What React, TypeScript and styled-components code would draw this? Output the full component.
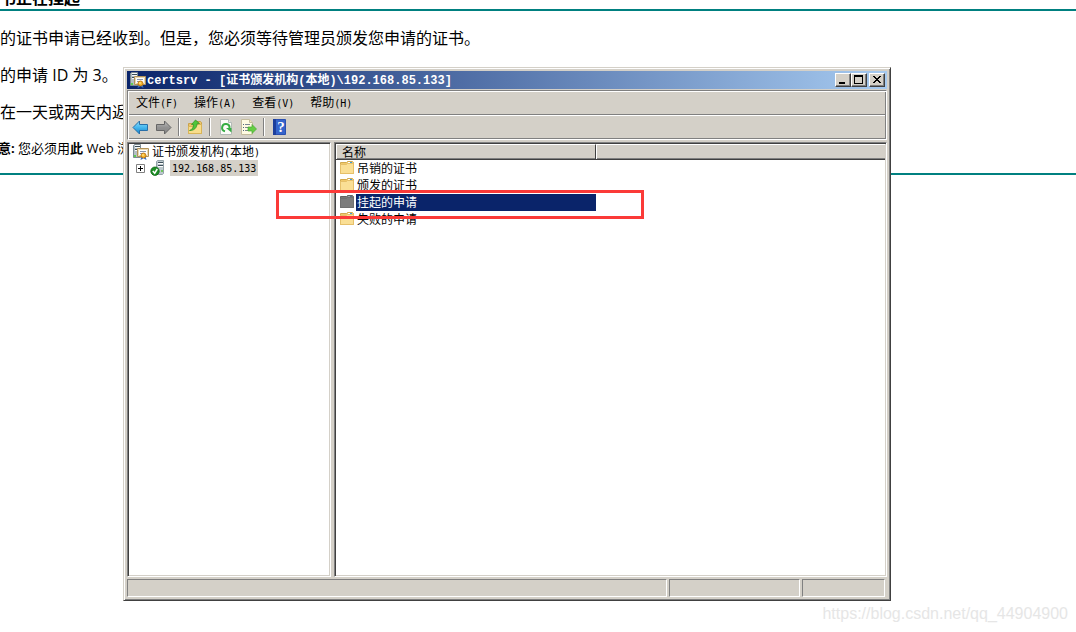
import React from "react";
import styled, { createGlobalStyle } from "styled-components";

const face = "#d4d0c8";
const shade = "#808080";
const dark = "#404040";

const GlobalStyle = createGlobalStyle`
  * { box-sizing: border-box; }
  html, body { margin: 0; background: #fff; }
  body { overflow: hidden; }
  button { font: inherit; color: inherit; margin: 0; padding: 0; border: 0; background: none; }
`;

const Page = styled.div`
  position: relative;
  min-height: 100vh;
  overflow: hidden;
  color: #000;
  font-family: "Open Sans", "Noto Sans CJK SC", sans-serif;
  font-size: 16px;
  line-height: 21px;
`;

const Article = styled.main`
  white-space: nowrap;
`;

const Heading = styled.h1`
  margin: -12px 0 0;
  font-size: 16px;
  line-height: 21px;
  font-weight: 700;
`;

const Rule = styled.hr`
  height: 2px;
  margin: 0 0 17px;
  border: 0;
  background: #008080;
`;

const Paragraph = styled.p`
  margin: 0 0 16px;
`;

const Note = styled(Paragraph)`
  font-size: 13px;
  line-height: 18px;
  text-indent: -2px;
`;

const Window = styled.section`
  position: absolute;
  top: 67px;
  left: 123px;
  right: 185px;
  height: calc(100vh - 98px);
  min-height: 300px;
  min-width: 500px;
  display: flex;
  flex-direction: column;
  padding: 3px;
  background: ${face};
  border: 1px solid;
  border-color: ${face} ${dark} ${dark} ${face};
  box-shadow: inset 1px 1px #fff, inset -1px -1px ${shade};
  font-family: "Liberation Mono", "Noto Sans CJK SC", monospace;
  font-size: 12px;
  line-height: 18px;
  white-space: nowrap;
`;

const TitleBar = styled.header`
  display: flex;
  align-items: center;
  flex: none;
  height: 18px;
  margin-bottom: 1px;
  padding: 0 2px 0 3px;
  color: #fff;
  background: linear-gradient(to right, #0a246a, #a6caf0);
`;

const Title = styled.h2`
  flex: 1;
  height: 18px;
  margin: 0 0 0 1px;
  font-size: 12px;
  line-height: 20px;
  font-weight: 700;
`;

const CaptionButton = styled.button<{ $spaced?: boolean }>`
  display: block;
  width: 16px;
  height: 14px;
  margin-left: ${(p) => (p.$spaced ? 2 : 0)}px;
  background: ${face};
  border: 1px solid;
  border-color: #fff ${dark} ${dark} #fff;
  box-shadow: inset -1px -1px ${shade};
  svg { display: block; }
`;

const Bars = styled.div`
  flex: none;
  margin-bottom: 2px;
  padding: 1px;
  border: 1px solid;
  border-color: ${shade} #fff #fff ${shade};
  box-shadow: inset 1px 1px #fff, inset -1px -1px ${shade};
`;

const MenuBar = styled.nav`
  display: flex;
  align-items: flex-end;
  gap: 16px;
  height: 22px;
  padding-left: 7px;
  line-height: 20px;
`;

const Latin = styled.span`
  font-family: "DejaVu Sans Mono", "Liberation Mono", monospace;
  font-size: 10px;
`;

const ToolBar = styled.div`
  display: flex;
  align-items: center;
  height: 24px;
  border-top: 1px solid ${shade};
  box-shadow: inset 0 1px #fff;
  padding-top: 1px;
`;

const ToolButton = styled.button`
  display: flex;
  align-items: center;
  justify-content: center;
  width: 23px;
  height: 22px;
`;

const Separator = styled.span`
  width: 2px;
  height: 18px;
  margin: 0 3px;
  border-left: 1px solid ${shade};
  border-right: 1px solid #fff;
`;

const Panes = styled.div`
  display: flex;
  flex: 1;
  min-height: 0;
  gap: 3px;
  margin-bottom: 2px;
`;

const Pane = styled.div<{ $grow?: boolean }>`
  flex: ${(p) => (p.$grow ? "1" : "0 0 204px")};
  min-width: 0;
  overflow: hidden;
  padding: 1px;
  background: #fff;
  border: 1px solid;
  border-color: ${shade} #fff #fff ${shade};
  box-shadow: inset 1px 1px ${dark}, inset -1px -1px ${face};
`;

const Tree = styled.ul`
  margin: 0;
  padding: 0 0 0 4px;
  list-style: none;
`;

const TreeRow = styled.li<{ $child?: boolean }>`
  display: flex;
  align-items: center;
  height: 16px;
  padding-left: ${(p) => (p.$child ? 3 : 0)}px;
`;

const Expander = styled.button`
  display: block;
  width: 9px;
  height: 9px;
  margin-right: 5px;
  svg { display: block; }
`;

const TreeLabel = styled.span<{ $selected?: boolean }>`
  display: block;
  height: 16px;
  margin-left: ${(p) => (p.$selected ? 4 : 1)}px;
  padding: 0 2px;
  background: ${(p) => (p.$selected ? face : "transparent")};
`;

const List = styled.table`
  width: 100%;
  table-layout: fixed;
  border-collapse: separate;
  border-spacing: 0;
`;

const HeadCell = styled.th<{ $width?: number }>`
  width: ${(p) => (p.$width ? `${p.$width}px` : "auto")};
  height: 16px;
  padding: 0 6px;
  text-align: left;
  font-weight: 400;
  background: ${face};
  border: solid;
  border-width: 1px ${(p) => (p.$width ? 1 : 0)}px 1px 0;
  border-color: #fff ${dark} ${dark} #fff;
  box-shadow: inset 1px 0 #fff, inset 0 -1px ${shade};
`;

const HeadLabel = styled.div`
  height: 14px;
`;

const Cell = styled.td`
  height: 17px;
  padding: 0;
`;

const Entry = styled.div`
  display: flex;
  align-items: flex-start;
  height: 17px;
  padding-left: 3px;
`;

const EntryLabel = styled.span<{ $selected?: boolean }>`
  flex: 1;
  height: 17px;
  margin-left: 1px;
  padding-left: 1px;
  line-height: 20px;
  color: ${(p) => (p.$selected ? "#fff" : "#000")};
  background: ${(p) => (p.$selected ? "#0a246a" : "transparent")};
`;

const StatusBar = styled.footer`
  display: flex;
  flex: none;
  gap: 2px;
  padding-right: 2px;
`;

const StatusCell = styled.div<{ $width?: number }>`
  flex: ${(p) => (p.$width ? `0 0 ${p.$width}px` : "1")};
  height: 18px;
  border: 1px solid;
  border-color: ${shade} #fff #fff ${shade};
`;

const Highlight = styled.div`
  position: absolute;
  top: 190px;
  left: 276px;
  width: 368px;
  height: 29px;
  border: 3px solid #fb3a38;
  pointer-events: none;
`;

const Watermark = styled.span`
  position: absolute;
  right: 8px;
  bottom: 8px;
  color: #e6e6e6;
  font-family: "Liberation Sans", Arial, sans-serif;
  font-size: 16px;
  line-height: 20px;
`;

const AuthorityIcon = () => (
  <svg width="16" height="16" viewBox="0 0 16 16" aria-hidden="true">
    <path d="M.5 1.500l1-1h6v13h-7z" fill="#b4bfc4" stroke="#7d8b92" />
    <path d="M2 2.500h5M2 5.500h5" stroke="#3d4e58" />
    <path d="M2 1.500h5M2 3.500h5M2 6.500h3" stroke="#f7fafb" />
    <path d="M1 11h2v2H1z" fill="#5fd050" />
    <path d="M4.500 4.500h11v8h-11z" fill="#fff" stroke="#b39358" />
    <path d="M5.500 5.500h9v6h-9z" fill="#fff" stroke="#ead9b2" />
    <path d="M7 7.500h6M7 9.500h3" stroke="#8b96ab" />
    <path d="M8.500 12l-1 4 2-1 1-1 1 1 2 1-1-4z" fill="#3971c5" />
    <circle cx="10.500" cy="11.500" r="2.500" fill="#f5b42b" stroke="#b96c0b" strokeWidth=".8" />
    <circle cx="10" cy="11" r=".9" fill="#ffe58a" />
  </svg>
);

const ServerIcon = () => (
  <svg width="16" height="16" viewBox="0 0 16 16" aria-hidden="true">
    <path d="M6.500 1.500l1-1h6v13l-1 1h-6z" fill="#bcc8cd" stroke="#93a1a8" />
    <path d="M8 2.500h5M8 5.500h5" stroke="#40515c" />
    <path d="M8 3.500h5M8 6.500h5" stroke="#fff" />
    <path d="M11 10h2v2h-2z" fill="#6fc75c" />
    <circle cx="5" cy="11.200" r="4.200" fill="#1d8f25" stroke="#0a6413" strokeWidth=".8" />
    <path d="M2.800 11l1.900 2.200 2.600-4.200" fill="none" stroke="#fff" strokeWidth="1.500" />
  </svg>
);

const ArrowIcon = ({ forward }: { forward?: boolean }) => (
  <svg width="17" height="15" viewBox="0 0 17 15" aria-hidden="true">
    <defs>
      <linearGradient id={forward ? "fwd" : "back"} x1="0" y1="0" x2="0" y2="1">
        <stop offset="0" stopColor={forward ? "#bdbdbd" : "#8ee0fb"} />
        <stop offset=".5" stopColor={forward ? "#929292" : "#45b7ee"} />
        <stop offset="1" stopColor={forward ? "#858585" : "#1583ca"} />
      </linearGradient>
    </defs>
    <path
      d={forward ? "M16 7.500L9.500 1v3.500h-8v6h8V14z" : "M1 7.500L7.500 1v3.500h8v6h-8V14z"}
      fill={`url(#${forward ? "fwd" : "back"})`}
      stroke={forward ? "#666" : "#286fa8"}
    />
  </svg>
);

const FolderUpIcon = () => (
  <svg width="16" height="16" viewBox="0 0 16 16" aria-hidden="true">
    <path d="M1.500 4.500h6l1-2h5l1 1v11h-13z" fill="#e9c46a" stroke="#c9a24c" />
    <path d="M1.500 7.500h7l1-2h5v9h-13z" fill="#f8dd8c" stroke="#d9b458" />
    <path d="M2.500 11.500C5.500 10.500 6.500 8 6.500 5.500L4.500 5.500 8.500 1l4 3.500-2.500.3c0 4-3 7-7.500 6.700z" fill="#4fc63a" stroke="#2b8f22" strokeWidth=".7" />
  </svg>
);

const RefreshIcon = () => (
  <svg width="16" height="16" viewBox="0 0 16 16" aria-hidden="true">
    <path d="M2.500 .5h8l3 3v12h-11z" fill="#fbfbf8" stroke="#b4bab7" />
    <path d="M10.500 .5v3h3" fill="#e4e8e6" stroke="#b4bab7" />
    <path d="M7 12.300A3.700 3.700 0 1 1 11.500 9" fill="none" stroke="#36ad43" strokeWidth="2" />
    <path d="M8 9h5.500v4.500z" fill="#36ad43" />
  </svg>
);

const ExportIcon = () => (
  <svg width="17" height="16" viewBox="0 0 17 16" aria-hidden="true">
    <path d="M1.500 .5h8l3 3v12h-11z" fill="#fffbe3" stroke="#c4bc9e" />
    <path d="M9.500 .5v3h3" fill="#eee6bd" stroke="#c4bc9e" />
    <path d="M3 5.500h1M3 8.500h1M3 11.500h1" stroke="#4f667e" />
    <path d="M5 5.500h5M5 8.500h4M5 11.500h4" stroke="#7c8791" />
    <path d="M8 8h4V5.500L16.500 10 12 14.500V12H8z" fill="#65ce42" stroke="#4aa938" strokeWidth=".7" />
  </svg>
);

const HelpIcon = () => (
  <svg width="14" height="16" viewBox="0 0 14 16" aria-hidden="true">
    <path d="M.5 .5h12v15H.5z" fill="#3564cc" stroke="#2a4fb0" />
    <path d="M0 0h3v16H0z" fill="#1d3f9c" />
    <text x="8" y="13" textAnchor="middle" fill="#fff" fontFamily="Liberation Serif, serif" fontSize="15" fontWeight="700">?</text>
  </svg>
);

const FolderIcon = ({ selected }: { selected?: boolean }) => (
  <svg width="16" height="16" viewBox="0 0 16 16" aria-hidden="true">
    <path d="M1.500 2.500h6l1-1h5l1 1v11h-13z" fill={selected ? "#777" : "#f0c96b"} stroke={selected ? "#636363" : "#d2aa50"} />
    <path d="M9 2.500h2" stroke={selected ? "#9aa3aa" : "#fff"} />
    <path d="M11 2.500h2" stroke={selected ? "#536e8d" : "#3c9be0"} />
    <path d="M1.500 4.500h6l1-1h6v10h-13z" fill={selected ? "#7c7c7c" : "#fadf95"} stroke={selected ? "#707070" : "#e6c06a"} />
  </svg>
);

const menus = [
  ["文件", "(F)"],
  ["操作", "(A)"],
  ["查看", "(V)"],
  ["帮助", "(H)"],
];

const entries = ["吊销的证书", "颁发的证书", "挂起的申请", "失败的申请"];

export default function App() {
  return (
    <>
      <GlobalStyle />
      <Page>
        <Article>
          <Heading>书正在挂起</Heading>
          <Rule />
          <Paragraph>的证书申请已经收到。但是，您必须等待管理员颁发您申请的证书。</Paragraph>
          <Paragraph>的申请 ID 为 3。</Paragraph>
          <Paragraph>在一天或两天内返</Paragraph>
          <Note>
            <b>意:</b> 您必须用<b>此</b> Web 浏
          </Note>
          <Rule />
        </Article>

        <Window aria-label="certsrv">
          <TitleBar>
            <AuthorityIcon />
            <Title>certsrv - [证书颁发机构(本地)\192.168.85.133]</Title>
            <CaptionButton aria-label="最小化">
              <svg width="14" height="12" viewBox="0 0 14 12"><path d="M3 8h6v2H3z" /></svg>
            </CaptionButton>
            <CaptionButton aria-label="最大化">
              <svg width="14" height="12" viewBox="0 0 14 12"><path d="M2 1h9v9H2zM3 3v6h7V3z" fillRule="evenodd" /></svg>
            </CaptionButton>
            <CaptionButton aria-label="关闭" $spaced>
              <svg width="14" height="12" viewBox="0 0 14 12" shapeRendering="crispEdges">
                <path d="M3 2h2v1h1v1h2V3h1V2h2v1h-1v1H9v1H8v1h1v1h1v1h1v1H9V8H8V7H6v1H5v1H3V8h1V7h1V6h1V5H5V4H4V3H3z" />
              </svg>
            </CaptionButton>
          </TitleBar>

          <Bars>
            <MenuBar>
              {menus.map(([name, key]) => (
                <button key={key}>{name}<Latin>{key}</Latin></button>
              ))}
            </MenuBar>
            <ToolBar>
              <ToolButton aria-label="后退"><ArrowIcon /></ToolButton>
              <ToolButton aria-label="前进"><ArrowIcon forward /></ToolButton>
              <Separator />
              <ToolButton aria-label="向上"><FolderUpIcon /></ToolButton>
              <Separator />
              <ToolButton aria-label="刷新"><RefreshIcon /></ToolButton>
              <ToolButton aria-label="导出列表"><ExportIcon /></ToolButton>
              <Separator />
              <ToolButton aria-label="帮助"><HelpIcon /></ToolButton>
            </ToolBar>
          </Bars>

          <Panes>
            <Pane>
              <Tree>
                <TreeRow>
                  <AuthorityIcon />
                  <TreeLabel>证书颁发机构<Latin>(</Latin>本地<Latin>)</Latin></TreeLabel>
                </TreeRow>
                <TreeRow $child>
                  <Expander aria-label="展开">
                    <svg width="9" height="9" viewBox="0 0 9 9">
                      <path d="M.5 .5h8v8h-8z" fill="#fff" stroke="#808080" />
                      <path d="M2 4.500h5M4.500 2v5" stroke="#000" />
                    </svg>
                  </Expander>
                  <ServerIcon />
                  <TreeLabel $selected><Latin>192.168.85.133</Latin></TreeLabel>
                </TreeRow>
              </Tree>
            </Pane>
            <Pane $grow>
              <List>
                <thead>
                  <tr>
                    <HeadCell $width={260}><HeadLabel>名称</HeadLabel></HeadCell>
                    <HeadCell aria-label="空列" />
                  </tr>
                </thead>
                <tbody>
                  {entries.map((name, i) => (
                    <tr key={name}>
                      <Cell>
                        <Entry>
                          <FolderIcon selected={i === 2} />
                          <EntryLabel $selected={i === 2}>{name}</EntryLabel>
                        </Entry>
                      </Cell>
                      <Cell />
                    </tr>
                  ))}
                </tbody>
              </List>
            </Pane>
          </Panes>

          <StatusBar>
            <StatusCell />
            <StatusCell $width={131} />
            <StatusCell $width={83} />
          </StatusBar>
        </Window>

        <Highlight />
        <Watermark>https://blog.csdn.net/qq_44904900</Watermark>
      </Page>
    </>
  );
}
